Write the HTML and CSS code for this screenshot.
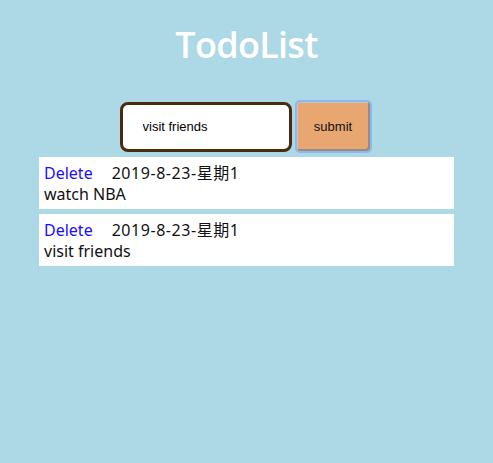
FILE: index.html
```html
<!DOCTYPE html>
<html>
<head>
<meta charset="utf-8">
<link rel="stylesheet" href="styles.css">
</head>
<body>
<div class="app">
  <h1 class="title">TodoList</h1>
  <div class="form">
    <input class="field" type="text" value="visit friends">
    <button class="submit">submit</button>
  </div>
  <ul class="list">
    <li class="item">
      <div class="meta"><span class="del">Delete</span><span class="date">2019-8-23-星期1</span></div>
      <div class="text">watch NBA</div>
    </li>
    <li class="item">
      <div class="meta"><span class="del">Delete</span><span class="date">2019-8-23-星期1</span></div>
      <div class="text">visit friends</div>
    </li>
  </ul>
</div>
</body>
</html>
```
FILE: styles.css
```css
html, body {
  margin: 0;
  padding: 0;
  background: #add8e6;
}
.app {
  display: flex;
  flex-direction: column;
  align-items: center;
}
.title {
  margin: 21px 0 31px;
  font-family: "Open Sans", "Noto Sans", sans-serif;
  font-weight: 600;
  font-size: 36px;
  line-height: 48px;
  letter-spacing: -0.7px;
  color: #ffffff;
}
.form {
  display: flex;
  align-items: center;
  gap: 3px;
  height: 53px;
  margin-left: -2px;
}
.field {
  box-sizing: border-box;
  width: 172px;
  height: 50px;
  border: 3px solid #4a2b10;
  border-radius: 8px;
  padding: 0 0 0 20px;
  font-family: "Liberation Sans", Arial, sans-serif;
  font-size: 13px;
  color: #000;
  background: #fff;
  outline: none;
}
.submit {
  box-sizing: border-box;
  width: 77px;
  height: 53px;
  border: 2px solid #8ab8f2;
  border-radius: 5px;
  background: #e8a770;
  box-shadow: inset -2px -2px 0 #9a8a80, inset 0 0 0 1px #c9c4c0;
  font-family: "Liberation Sans", Arial, sans-serif;
  font-size: 13px;
  color: #111;
  padding: 0;
}
.list {
  list-style: none;
  margin: 4px 0 0;
  padding: 0;
  width: 415px;
  display: flex;
  flex-direction: column;
  gap: 5px;
}
.item {
  background: #fff;
  height: 52px;
  box-sizing: border-box;
  padding: 6px 5px 5px;
  font-family: "Noto Sans", "Noto Sans CJK TC", sans-serif;
  font-size: 16px;
  line-height: 21px;
  color: #111;
}
.del {
  color: #1a0dff;
}
.date {
  margin-left: 19px;
  letter-spacing: 0.55px;
}
```
